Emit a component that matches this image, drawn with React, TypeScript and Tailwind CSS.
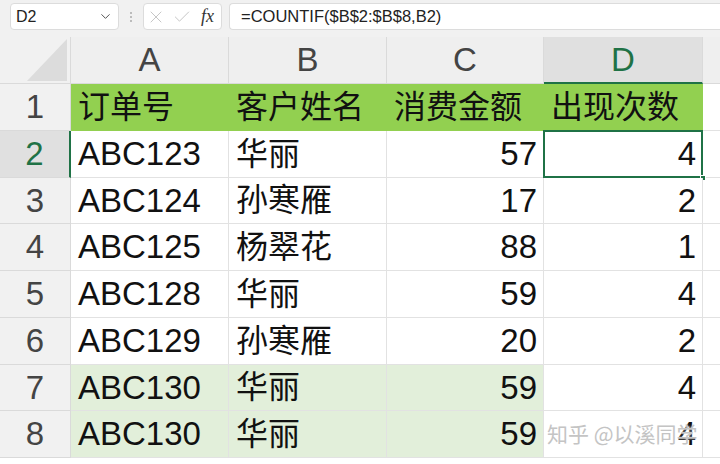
import { ChevronDown, X, Check } from 'lucide-react'

const rows: [string, string, number, number][] = [
  ['ABC123', '华丽', 57, 4],
  ['ABC124', '孙寒雁', 17, 2],
  ['ABC125', '杨翠花', 88, 1],
  ['ABC128', '华丽', 59, 4],
  ['ABC129', '孙寒雁', 20, 2],
  ['ABC130', '华丽', 59, 4],
  ['ABC130', '华丽', 59, 4],
]

const font = { fontFamily: '"Liberation Sans", "Noto Sans CJK SC", sans-serif' }

export default function App() {
  return (
    <div className="w-[720px] h-[464px] overflow-hidden bg-white relative" style={font}>
      {/* formula bar */}
      <div className="h-[37px] bg-[#f1f1f1] flex items-start pt-[3px] pl-[10px]">
        <div className="w-[109px] h-[27px] bg-white border border-[#dcdcdc] rounded-[4px] flex items-center justify-between pl-[5px] pr-[5px]">
          <span className="text-[16px] text-[#222]">D2</span>
          <ChevronDown size={15} strokeWidth={1.6} className="text-[#555]" />
        </div>
        <div className="w-[24px] h-[27px] flex flex-col items-center justify-center gap-[2px]">
          <span className="w-[2px] h-[2px] bg-[#aaa] rounded-full" />
          <span className="w-[2px] h-[2px] bg-[#aaa] rounded-full" />
          <span className="w-[2px] h-[2px] bg-[#aaa] rounded-full" />
        </div>
        <div className="w-[79px] h-[27px] bg-white border border-[#dcdcdc] rounded-[4px] flex items-center pl-[2px] gap-[6px]">
          <X size={20} strokeWidth={1} className="text-[#bbb]" />
          <Check size={20} strokeWidth={1} className="text-[#bbb]" />
          <span className="text-[18px] italic text-[#333] ml-[3px]" style={{ fontFamily: '"Liberation Serif", serif' }}>fx</span>
        </div>
        <div className="ml-[7px] flex-1 h-[27px] bg-white border border-[#dcdcdc] border-r-0 rounded-l-[4px] flex items-center pl-[11px]">
          <span className="text-[16.5px] text-[#222]">=COUNTIF($B$2:$B$8,B2)</span>
        </div>
      </div>

      {/* column headers */}
      <div className="flex h-[47px]">
        <div className="w-[71px] shrink-0 bg-[#f1f1f1] border-r border-b border-[#dadada] flex items-end justify-end pr-[3px] pb-[2px]">
          <svg width="40" height="42" viewBox="0 0 40 42">
            <polygon points="40,0 40,42 0,42" fill="#dcdcdc" />
          </svg>
        </div>
        {['A', 'B', 'C'].map((c, i) => (
          <div
            key={c}
            className={`${i === 2 ? 'w-[157px]' : 'w-[158px]'} shrink-0 bg-[#efefef] border-r border-b border-[#dadada] flex items-center justify-center text-[33px] text-[#444]`}
          >
            {c}
          </div>
        ))}
        <div className="w-[159px] shrink-0 bg-[#e0e0e0] border-r border-[#dadada] border-b-2 border-b-[#1f7246] flex items-center justify-center text-[33px] text-[#1f7246]">
          D
        </div>
        <div className="flex-1 bg-[#efefef] border-b border-[#dadada]" />
      </div>

      {/* header row */}
      <div className="flex h-[46.75px]">
        <div className="w-[71px] shrink-0 bg-[#f1f1f1] border-r border-b border-[#dadada] flex items-center justify-center text-[33px] text-[#444]">
          1
        </div>
        {['订单号', '客户姓名', '消费金额', '出现次数'].map((t, i) => (
          <div
            key={t}
            className={`${i === 2 ? 'w-[157px]' : i === 3 ? 'w-[159px]' : 'w-[158px]'} shrink-0 bg-[#92d050] border-r border-b border-[#92d050] flex items-center pl-[7px] text-[32px] text-[#111]`}
          >
            {t}
          </div>
        ))}
        <div className="flex-1 border-b border-[#e2e2e2]" />
      </div>

      {rows.map((r, idx) => {
        const n = idx + 2
        const sel = n === 2
        const green = n >= 7
        const fill = green ? 'bg-[#e2efda]' : 'bg-white'
        return (
          <div key={idx} className="flex h-[46.75px]">
            <div
              className={`w-[71px] shrink-0 border-b border-[#dadada] flex items-center justify-center text-[33px] ${
                sel ? 'bg-[#e0e0e0] text-[#1f7246] border-r-2 border-r-[#1f7246]' : 'bg-[#f1f1f1] text-[#444] border-r border-r-[#dadada]'
              }`}
            >
              {n}
            </div>
            <div className={`w-[158px] shrink-0 ${fill} border-r border-b border-[#e2e2e2] flex items-center pl-[7px] text-[33px] text-[#111]`}>
              {r[0]}
            </div>
            <div className={`w-[158px] shrink-0 ${fill} border-r border-b border-[#e2e2e2] flex items-center pl-[7px] text-[32px] text-[#111]`}>
              {r[1]}
            </div>
            <div className={`w-[157px] shrink-0 ${fill} border-r border-b border-[#e2e2e2] flex items-center justify-end pr-[6px] text-[33px] text-[#111]`}>
              {r[2]}
            </div>
            <div className="w-[159px] shrink-0 relative bg-white border-r border-b border-[#e2e2e2] flex items-center justify-end pr-[6px] text-[33px] text-[#111]">
              {r[3]}
              {sel && (
                <>
                  <div className="absolute -left-px -top-px -right-px -bottom-px border-2 border-[#1f7246]" />
                  <div className="absolute -right-[4px] -bottom-[4px] w-[6px] h-[6px] bg-[#1f7246] border border-white" />
                </>
              )}
            </div>
            <div className="flex-1 border-b border-[#e2e2e2]" />
          </div>
        )
      })}

      {/* watermark */}
      <div
        className="absolute left-[547px] top-[419px] text-[21px] leading-[28px] text-[#c4c4c4]"
        style={{ fontFamily: '"Noto Sans CJK SC", sans-serif', textShadow: '0 0 2px #fff' }}
      >
        知乎 @以溪同学
      </div>
    </div>
  )
}
